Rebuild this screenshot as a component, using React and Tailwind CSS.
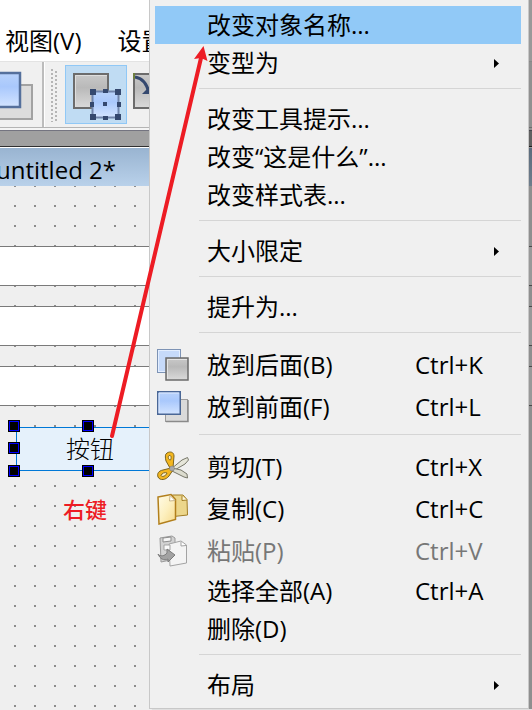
import React from "react"

const MENU = [
  { label: "改变对象名称...", active: true },
  { label: "变型为", submenu: true },
  null,
  { label: "改变工具提示..." },
  { label: "改变“这是什么”..." },
  { label: "改变样式表..." },
  null,
  { label: "大小限定", submenu: true },
  null,
  { label: "提升为..." },
  null,
  { label: "放到后面(B)", keys: "Ctrl+K", icon: "back" },
  { label: "放到前面(F)", keys: "Ctrl+L", icon: "front" },
  null,
  { label: "剪切(T)", keys: "Ctrl+X", icon: "cut" },
  { label: "复制(C)", keys: "Ctrl+C", icon: "copy" },
  { label: "粘贴(P)", keys: "Ctrl+V", icon: "paste", disabled: true },
  { label: "选择全部(A)", keys: "Ctrl+A" },
  { label: "删除(D)" },
  null,
  { label: "布局", submenu: true },
]

const Gradients = () => (
  <svg className="absolute h-0 w-0" aria-hidden="true">
    <defs>
      <linearGradient id="blue" x1="0" y1="0" x2="0" y2="1">
        <stop offset="0" stopColor="#b9d3fb" />
        <stop offset="0.4" stopColor="#a9c8fc" />
        <stop offset="1" stopColor="#d3e4ff" />
      </linearGradient>
      <linearGradient id="gray" x1="0" y1="0" x2="0" y2="1">
        <stop offset="0" stopColor="#c9c9c9" />
        <stop offset="0.4" stopColor="#b9b9b9" />
        <stop offset="1" stopColor="#dadada" />
      </linearGradient>
      <linearGradient id="paper" x1="0" y1="0" x2="1" y2="1">
        <stop offset="0" stopColor="#fffbe8" />
        <stop offset="0.5" stopColor="#fdf0c0" />
        <stop offset="1" stopColor="#f6d98a" />
      </linearGradient>
    </defs>
  </svg>
)

const ICONS = {
  back: (
    <>
      <rect x="0.5" y="0.5" width="23" height="23" fill="#c6dafa" stroke="#7d93b5" />
      <rect x="1.5" y="1.5" width="21" height="21" fill="none" stroke="#e3eeff" />
      <rect x="9" y="9" width="22" height="22" fill="url(#gray)" stroke="#6a6a6a" strokeWidth="1.5" />
      <path d="M10.5 30V10.5H30" fill="none" stroke="#e4e4e4" />
    </>
  ),
  front: (
    <>
      <rect x="8.5" y="8.5" width="22" height="22" fill="#dadada" stroke="#9c9c9c" />
      <path d="M9 30.5H31V9" fill="none" stroke="#8a8a8a" strokeWidth="1.5" />
      <rect x="0.75" y="0.75" width="22.5" height="22.5" fill="url(#blue)" stroke="#4a6796" strokeWidth="1.5" />
      <path d="M2 22V2H22" fill="none" stroke="#dce9ff" />
    </>
  ),
  cut: (
    <>
      <path d="M14 18L25 9L30.5 6.5L31.5 9L28 13L16 20Z" fill="#e6e6da" stroke="#77776a" />
      <path d="M15 17L24 19L30 23L30.5 27L27 26L14 19.5Z" fill="#dcdccf" stroke="#77776a" />
      <path d="M10 2C13 0 17 1 17 5L16 17H13L9 10C8 6 8 3 10 2Z" fill="#f3b61f" stroke="#7b6420" />
      <path d="M12 4.5C14.5 4 14.5 7 13.5 9C11.5 9 10.5 6 12 4.5Z" fill="#fff4cf" stroke="#7b6420" />
      <path d="M14 17L6 19C1 20 0 23 1 26C3 30 9 29 12 25L16 19Z" fill="#f3b61f" stroke="#7b6420" />
      <path d="M4 24.5C5 22 8 21 10 22C9 25 5 26.5 4 24.5Z" fill="#fff4cf" stroke="#7b6420" />
      <circle cx="15" cy="17.5" r="2.5" fill="#a8a8a8" stroke="#777" strokeWidth="0.5" />
    </>
  ),
  copy: (
    <>
      <path d="M11 3.5L16 2L26 2L30 6.5L30.5 22L12 24Z" fill="#ecd68b" stroke="#a17d25" />
      <path d="M25 3V7.5L30 7" fill="#fff8dc" stroke="#a17d25" />
      <path d="M1 4L14 1.5L18.5 6.5L18.5 26.5L2 31Z" fill="url(#paper)" stroke="#b27f1c" strokeWidth="1.5" />
      <path d="M13 2.5L12.5 8L18 7.5Z" fill="#fff" stroke="#c9b58a" />
    </>
  ),
  paste: (
    <>
      <path d="M3 3L15 1L18 3V24L4 27Z" fill="#d2d2d2" stroke="#9a9a9a" />
      <path d="M6 3L14 2V6L6 7Z" fill="#f6f6f6" stroke="#8d8d8d" />
      <path d="M12 9L24 6L29.5 10V28L13 31Z" fill="#f4f4f4" stroke="#a3a3a3" />
      <path d="M24 7V11L29 10.5" fill="#fff" stroke="#a3a3a3" />
      <path d="M7 10H13V15H7Z" fill="#fafafa" stroke="#a3a3a3" />
      <path d="M1 19C3 22 8 21 10 18V14L18 20L11 27V24C7 26 3 24 1 19Z" fill="#a2a2a2" stroke="#7c7c7c" />
    </>
  ),
}

const MenuItem = ({ item }) => (
  <li role="none">
    <button
      type="button"
      role="menuitem"
      disabled={item.disabled}
      className={`flex w-full items-center text-left whitespace-nowrap ${
        item.icon ? "h-[42px]" : "h-[38px]"
      } ${item.active ? "bg-[#91c9f7]" : ""} ${
        item.disabled ? "text-[#777777]" : "text-black"
      }`}
    >
      <span className="w-[52px] shrink-0 pl-0.5">
        {item.icon && (
          <svg className="size-8" viewBox="0 0 32 32">
            {ICONS[item.icon]}
          </svg>
        )}
      </span>
      <span className="flex-1">{item.label}</span>
      {item.keys && <span className="w-[106px] shrink-0">{item.keys}</span>}
      {item.submenu && (
        <svg className="mr-[22px] h-[9px] w-[5px] shrink-0" viewBox="0 0 5 9">
          <path d="M0 0L5 4.5L0 9Z" />
        </svg>
      )}
    </button>
  </li>
)

const ContextMenu = () => (
  <ul
    role="menu"
    className="absolute top-0 right-[3px] left-[149px] z-10 border-x border-b border-[#c8c8c8] bg-[#f0f0f0] pt-1.5 pr-[7px] pb-1 pl-[5px] text-2xl shadow-[3px_0_1px_rgba(0,0,0,0.4)]"
  >
    {MENU.map((item, i) =>
      item ? (
        <MenuItem key={i} item={item} />
      ) : (
        <li key={i} role="separator" className="h-[18px] pt-1.5 pl-11">
          <div className="h-px bg-[#d5d5d5]" />
        </li>
      )
    )}
  </ul>
)

const Toolbar = () => (
  <div className="flex h-[67px] items-center border-t border-b border-t-[#e3e3e3] border-b-[#b4b4b4] bg-[#f0f0f0]">
    <button type="button" aria-label="Bring to front" className="w-[42px] shrink-0">
      <svg className="h-[50px] w-[42px]" viewBox="0 0 42 50">
        <rect x="-4" y="15" width="36" height="34" fill="#dcdcdc" stroke="#a2a2a2" strokeWidth="2" />
        <rect x="-14" y="3" width="34" height="34" fill="url(#blue)" stroke="#55709c" strokeWidth="2.5" />
      </svg>
    </button>
    <div className="h-full w-0.5 shrink-0 bg-[#bcbcbc]" />
    <div className="h-full w-px shrink-0 bg-white" />
    <svg className="ml-1.5 h-[54px] w-[13px] shrink-0" viewBox="0 0 13 54">
      <path d="M1 1V54M5 3V54" stroke="#b5b5b5" strokeWidth="2" strokeDasharray="2 2" />
    </svg>
    <button
      type="button"
      aria-label="Edit widgets"
      className="ml-px h-[59px] w-[62px] shrink-0 border border-[#90c8f6] bg-[#c0dcf3]"
    >
      <svg className="h-[57px] w-[60px]" viewBox="0 0 60 57">
        <rect x="8" y="8" width="34" height="34" fill="url(#gray)" stroke="#6c6c6c" strokeWidth="2" />
        <path d="M9.5 41V9.5H41" fill="none" stroke="#dedede" />
        <rect x="26.5" y="25.5" width="26" height="26" fill="url(#blue)" stroke="#7084ab" strokeWidth="2" />
        <path
          d="M24 23h6v6h-6zM49 23h6v6h-6zM24 48h6v6h-6zM49 48h6v6h-6zM37 23h5v4h-5zM37 50h5v4h-5zM24 36h4v5h-4zM51 36h4v5h-4zM37 36h4v4h-4z"
          fill="#34486f"
        />
      </svg>
    </button>
    <button type="button" aria-label="Edit signals and slots" className="ml-1.5 shrink-0">
      <svg className="h-[58px] w-10" viewBox="0 0 40 58">
        <rect x="1" y="8" width="34" height="34" fill="url(#gray)" stroke="#6c6c6c" strokeWidth="2" />
        <path d="M2 11C9 12 14 18 16 27" fill="none" stroke="#34486f" strokeWidth="3" />
        <path d="M9 28H19V18Z" fill="#34486f" />
        <path d="M0 7h2v6H0z" fill="#6f8040" />
      </svg>
    </button>
  </div>
)

const Handle = ({ className }) => (
  <span
    className={`absolute size-3 border border-black bg-black shadow-[inset_0_0_0_1px_#0000ff] ${className}`}
  />
)

const FormCanvas = () => (
  <div className="flex-1 bg-[#efefef] bg-[radial-gradient(circle_at_center,#8c8c8c_1px,transparent_1px)] bg-size-[20px_20px] bg-position-[5px_10px] pt-15">
    <div className="flex flex-col gap-5">
      <input aria-label="Field 1" className="h-10 w-full border-y border-[#7a7a7a] bg-white" />
      <input aria-label="Field 2" className="h-10 w-full border-y border-[#7a7a7a] bg-white" />
      <input aria-label="Field 3" className="h-10 w-full border-y border-[#7a7a7a] bg-white" />
    </div>
    <div className="relative mt-[21px] ml-4 w-[148px]">
      <button
        type="button"
        className="h-11 w-full border border-[#0078d7] bg-[#e5f1fb] text-2xl font-light text-black"
      >
        按钮
      </button>
      <Handle className="-top-[7px] -left-2" />
      <Handle className="-top-[7px] left-[66px]" />
      <Handle className="top-[15px] -left-2" />
      <Handle className="top-[38px] -left-2" />
      <Handle className="top-[38px] left-[66px]" />
    </div>
    <p className="mt-[22px] ml-[63px] text-[22px] leading-8 font-medium text-[#ed1c24]">右键</p>
  </div>
)

const App = () => (
  <div className="relative flex min-h-screen flex-col overflow-hidden bg-[#f0f0f0] font-['Open_Sans','Noto_Sans_CJK_SC',sans-serif]">
    <Gradients />
    <nav className="flex h-[61px] gap-9 bg-white pt-5 pl-[5px] text-2xl leading-10 whitespace-nowrap text-black">
      <button type="button">视图(V)</button>
      <button type="button">设置(S)</button>
    </nav>
    <Toolbar />
    <div className="h-0.5 bg-[#f4f4f4]" />
    <div className="h-[17px] border-t border-b border-t-[#747480] border-b-[#303030] bg-[#a0a0a0]" />
    <div className="h-[39px] border-t border-white bg-linear-to-b from-[#99b4d1] to-[#b9d1ea] pt-1.5 text-2xl text-black">
      <p className="-ml-1">untitled 2*</p>
    </div>
    <FormCanvas />
    <ContextMenu />
    <svg className="pointer-events-none absolute top-0 left-0 z-20 h-[440px] w-[220px]" viewBox="0 0 220 440">
      <path d="M112 436L201 58" stroke="#ed1c24" strokeWidth="4" strokeLinecap="round" />
      <path d="M203.5 46L207.5 61L201 58L194 59Z" fill="#ed1c24" />
    </svg>
  </div>
)

export default App
